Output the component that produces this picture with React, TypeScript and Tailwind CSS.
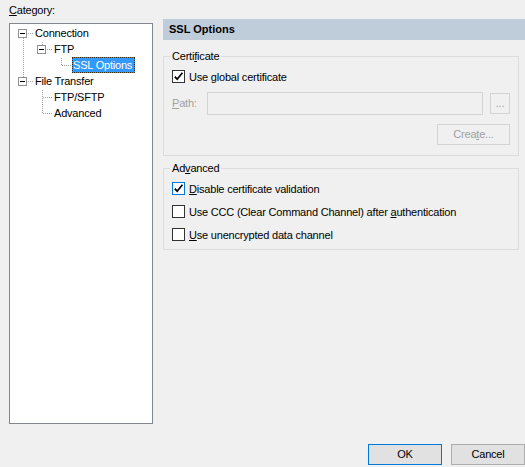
import React from "react";

type CellKind = "blank" | "line" | "tee" | "corner" | "boxDown" | "boxUp";

const LINE = "#a0a0a0";

function vDots(x: number, y1: number, y2: number, key: string) {
  const out: React.ReactNode[] = [];
  for (let y = y1; y <= y2; y++) {
    if (y % 2 === 1) out.push(<rect key={key + y} x={x} y={y} width={1} height={1} fill={LINE} />);
  }
  return out;
}

function hDots(x1: number, x2: number, y: number, key: string) {
  const out: React.ReactNode[] = [];
  for (let x = x1; x <= x2; x++) {
    if (x % 2 === 0) out.push(<rect key={key + x} x={x} y={y} width={1} height={1} fill={LINE} />);
  }
  return out;
}

function TreeCell({ kind }: { kind: CellKind }) {
  return (
    <svg width="19" height="16" className="shrink-0" shapeRendering="crispEdges">
      {kind === "line" && vDots(9, 0, 15, "v")}
      {kind === "tee" && [...vDots(9, 0, 15, "v"), ...hDots(10, 18, 8, "h")]}
      {kind === "corner" && [...vDots(9, 0, 8, "v"), ...hDots(10, 18, 8, "h")]}
      {(kind === "boxDown" || kind === "boxUp") && (
        <>
          {kind === "boxDown" ? vDots(9, 13, 15, "v") : vDots(9, 0, 3, "v")}
          {hDots(14, 18, 8, "h")}
          <rect x={4.5} y={4.5} width={8} height={8} fill="#fff" stroke="#919191" strokeWidth={1} />
          <rect x={6} y={8} width={5} height={1} fill="#000" />
        </>
      )}
    </svg>
  );
}

function TreeRow({ cells, label, selected }: { cells: CellKind[]; label: string; selected?: boolean }) {
  return (
    <div className="flex h-[16px] items-center">
      {cells.map((c, i) => (
        <TreeCell key={i} kind={c} />
      ))}
      <span
        className={
          selected
            ? "ml-[1px] h-[16px] border border-dotted border-[#3a2a10] bg-[#3399ff] pr-[2px] leading-[14px] text-white"
            : "ml-[1px] h-[16px] border border-transparent pr-[2px] leading-[14px] text-black"
        }
      >
        {label}
      </span>
    </div>
  );
}

function CheckBox({ checked, focused, children }: { checked?: boolean; focused?: boolean; children: React.ReactNode }) {
  return (
    <div className="flex h-[17px] items-center">
      <div
        className={
          focused
            ? "flex h-[13px] w-[13px] items-center justify-center border border-[#0078d7] bg-white"
            : "flex h-[13px] w-[13px] items-center justify-center border border-[#333333] bg-white"
        }
      >
        {checked && (
          <svg width="11" height="11" viewBox="0 0 11 11">
            <path d="M1.8 5.6 L4.2 8.2 L9.4 1.8" fill="none" stroke="#000" strokeWidth="1.7" />
          </svg>
        )}
      </div>
      <span className="ml-[4px] leading-[14px]">{children}</span>
    </div>
  );
}

export default function App() {
  return (
    <div className="flex h-[467px] w-[525px] flex-col overflow-hidden bg-[#f0f0f0] font-['Liberation_Sans',Arial,sans-serif] text-[11px] tracking-[-0.2px] text-black">
      <div className="flex items-start">
        <div className="ml-[9px] flex w-[144px] flex-col pt-[3px]">
          <div className="mb-[5px] h-[15px] leading-[15px]">
            <u>C</u>ategory:
          </div>
          <div className="h-[401px] border border-[#828790] bg-white pl-[4px] pt-[1px]">
            <TreeRow cells={["boxDown"]} label="Connection" />
            <TreeRow cells={["line", "boxUp"]} label="FTP" />
            <TreeRow cells={["line", "blank", "corner"]} label="SSL Options" selected />
            <TreeRow cells={["boxUp"]} label="File Transfer" />
            <TreeRow cells={["blank", "tee"]} label="FTP/SFTP" />
            <TreeRow cells={["blank", "corner"]} label="Advanced" />
          </div>
        </div>

        <div className="ml-[10px] flex flex-1 flex-col pt-[19px]">
          <div className="flex h-[21px] items-center bg-[#bfcddb] pl-[6px] font-bold tracking-normal">SSL Options</div>

          <fieldset className="mt-[9px] w-[356px] border border-[#dcdcdc] px-[8px] pb-[10px] pt-[5px]">
            <legend className="-ml-[2px] px-[2px] leading-[14px]">
              Certi<u>f</u>icate
            </legend>
            <CheckBox checked>
              Use <u>g</u>lobal certificate
            </CheckBox>
            <div className="mt-[7px] flex h-[23px] items-center">
              <div className="w-[35px] text-[#a0a0a0]">
                <u>P</u>ath:
              </div>
              <div className="h-[23px] flex-1 border border-[#d4d4d4] bg-[#f0f0f0]" />
              <div className="ml-[7px] flex h-[21px] w-[20px] items-center justify-center border border-[#d4d4d4] bg-[#f0f0f0] text-[#a0a0a0]">
                ...
              </div>
            </div>
            <div className="mt-[9px] flex justify-end">
              <div className="flex h-[21px] w-[73px] items-center justify-center border border-[#d4d4d4] bg-[#f0f0f0] text-[#a0a0a0]">
                Crea<u>t</u>e...
              </div>
            </div>
          </fieldset>

          <fieldset className="mt-[5px] flex w-[356px] flex-col gap-[6px] border border-[#dcdcdc] px-[8px] pb-[6px] pt-[5px]">
            <legend className="-ml-[2px] px-[2px] leading-[14px]">
              Ad<u>v</u>anced
            </legend>
            <CheckBox checked focused>
              <u>D</u>isable certificate validation
            </CheckBox>
            <CheckBox>
              Use CCC (Clear Command Channel) after <u>a</u>uthentication
            </CheckBox>
            <CheckBox>
              <u>U</u>se unencrypted data channel
            </CheckBox>
          </fieldset>
        </div>
      </div>

      <div className="mt-[20px] flex justify-end gap-[9px]">
        <button className="flex h-[21px] w-[74px] items-center justify-center border border-[#0078d7] bg-[#e1e1e1]">OK</button>
        <button className="flex h-[21px] w-[74px] items-center justify-center border border-[#adadad] bg-[#e1e1e1]">Cancel</button>
      </div>
    </div>
  );
}
